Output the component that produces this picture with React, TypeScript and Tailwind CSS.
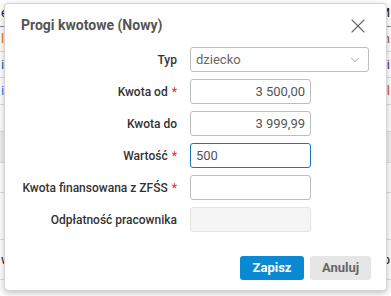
import { X, ChevronDown } from "lucide-react";

const bgRows = [
  { h: "h-[27px]", left: "e", lc: "text-[#222]", right: "M", rc: "text-[#222]", border: "border-[#888]" },
  { h: "h-[25px]", left: "ll", lc: "text-[#e07b00]", right: "n", rc: "text-[#a0522d]", border: "border-[#ddd]" },
  { h: "h-[26px]", left: "i", lc: "text-[#1565c0]", right: "i", rc: "text-[#6a1b9a]", border: "border-[#ddd]" },
  { h: "h-[27px]", left: "i", lc: "text-[#1e88e5]", right: "l", rc: "text-[#e65100]", border: "border-[#ddd]" },
  { h: "h-[27px]", left: "", lc: "", right: "", rc: "", border: "border-[#ddd]" },
  { h: "h-[31px]", left: "", lc: "", right: "", rc: "", border: "border-[#ddd]" },
  { h: "h-[30px]", left: "", lc: "", right: "", rc: "", border: "border-[#ddd]" },
  { h: "h-[47px]", left: "", lc: "", right: "", rc: "", border: "border-[#ddd]" },
  { h: "h-[40px]", left: "w", lc: "text-[#222]", right: "p", rc: "text-[#222]", border: "border-[#ddd]" },
];

const Label = ({ text, required }: { text: string; required?: boolean }) => (
  <div className="flex items-center justify-end h-[25px] text-[12px] font-medium text-[#333] whitespace-nowrap">
    {text}
    {required && <span className="text-[#e53935] ml-[4px]">*</span>}
  </div>
);

export default function App() {
  return (
    <div
      className="relative w-[391px] h-[296px] overflow-hidden bg-white"
      style={{ fontFamily: "Roboto, 'Liberation Sans', sans-serif" }}
    >
      {/* background table */}
      <div className="flex flex-col text-[13px]">
        {bgRows.map((r, i) => (
          <div
            key={i}
            className={`${r.h} flex items-center justify-between border-b ${r.border} ${i === 5 ? "bg-[#f0f0f0]" : ""}`}
          >
            <span className={`pl-[1px] ${r.lc}`}>{r.left}</span>
            <span className={`pr-[1px] ${r.rc}`}>{r.right}</span>
          </div>
        ))}
      </div>

      {/* modal */}
      <div className="absolute left-[4px] top-[3px] w-[383px] h-[288px] bg-white rounded-[4px] border border-[#d6d6d6] shadow-[0_2px_6px_rgba(0,0,0,0.25)] flex flex-col">
        <div className="flex items-center justify-between pl-[16px] pr-[16px] pt-[11px] h-[32px]">
          <h2 className="text-[14px] font-bold text-[#555]">Progi kwotowe (Nowy)</h2>
          <X className="w-[24px] h-[24px] text-[#666]" strokeWidth={1.1} />
        </div>

        <div className="grid grid-cols-[172px_auto] gap-x-[13px] gap-y-[7px] mt-[11px]">
          <Label text="Typ" />
          <div className="w-[179px] h-[25px] border border-[#bdbdbd] rounded-[3px] flex items-center justify-between pl-[5px] pr-[6px] text-[13px] text-[#666]">
            dziecko
            <ChevronDown className="w-[14px] h-[14px] text-[#888]" strokeWidth={1.25} />
          </div>

          <Label text="Kwota od" required />
          <div className="w-[121px] h-[25px] border border-[#bdbdbd] rounded-[3px] flex items-center justify-end pr-[5px] text-[13px] text-[#555]">
            3 500,00
          </div>

          <Label text="Kwota do" />
          <div className="w-[121px] h-[25px] border border-[#bdbdbd] rounded-[3px] flex items-center justify-end pr-[5px] text-[13px] text-[#555]">
            3 999,99
          </div>

          <Label text="Wartość" required />
          <div className="w-[121px] h-[25px] border border-[#1976b8] rounded-[3px] flex items-center pl-[5px] text-[13px] text-[#555]">
            500
          </div>

          <Label text="Kwota finansowana z ZFŚS" required />
          <div className="w-[121px] h-[25px] border border-[#bdbdbd] rounded-[3px]" />

          <Label text="Odpłatność pracownika" />
          <div className="w-[121px] h-[25px] border border-[#e3e3e3] bg-[#f5f5f5] rounded-[3px]" />
        </div>

        <div className="flex justify-end gap-[6px] pr-[15px] mt-auto mb-[10px]">
          <button className="w-[64px] h-[24px] rounded-[3px] bg-[#0a8ad2] text-white text-[13px] font-bold">
            Zapisz
          </button>
          <button className="w-[61px] h-[24px] rounded-[3px] bg-[#e6e6e6] text-[#666] text-[13px] font-bold">
            Anuluj
          </button>
        </div>
      </div>
    </div>
  );
}
